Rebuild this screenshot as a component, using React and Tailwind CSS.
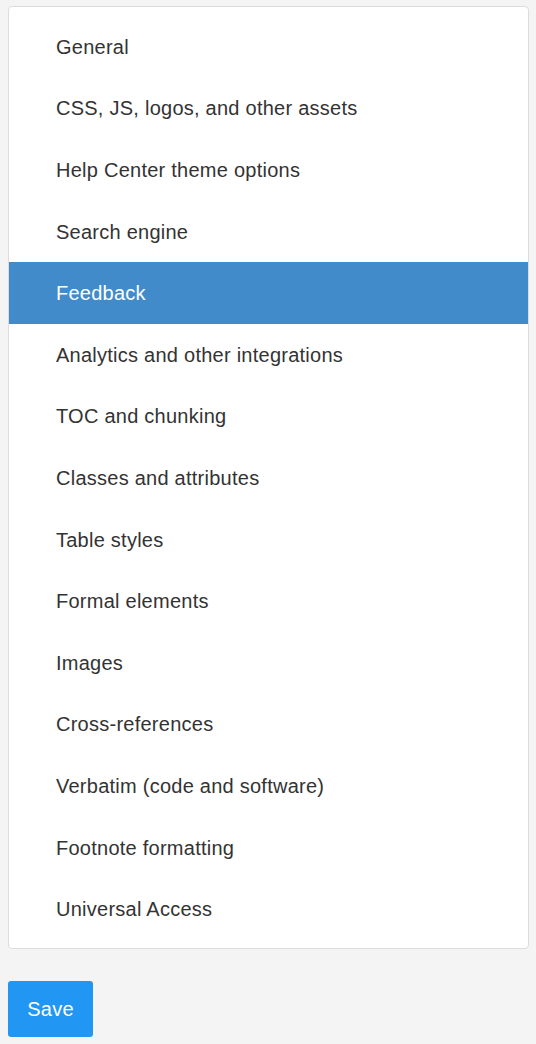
const sections = [
  "General",
  "CSS, JS, logos, and other assets",
  "Help Center theme options",
  "Search engine",
  "Feedback",
  "Analytics and other integrations",
  "TOC and chunking",
  "Classes and attributes",
  "Table styles",
  "Formal elements",
  "Images",
  "Cross-references",
  "Verbatim (code and software)",
  "Footnote formatting",
  "Universal Access",
];

const App = () => {
  const active = "Feedback";

  return (
    <div className="min-h-[1044px] bg-[#f4f4f4] pl-2 pr-[7px] pt-[6px] font-['Liberation_Sans',Arial,sans-serif] tracking-[0.25px]">
      <div className="bg-white border border-[#dcdcdc] rounded-[4px] pt-[9px] pb-[8px]">
        {sections.map((name) => (
          <div
            key={name}
            className={
              name === active
                ? "h-[61.6px] flex items-center pl-[47px] text-[20px] bg-[#418bca] text-white"
                : "h-[61.6px] flex items-center pl-[47px] text-[20px] text-[#333]"
            }
          >
            {name}
          </div>
        ))}
      </div>

      <button className="mt-[32px] w-[85px] h-[56px] rounded-[3px] bg-[#2196f3] text-white text-[20px]">
        Save
      </button>
    </div>
  );
};

export default App;
